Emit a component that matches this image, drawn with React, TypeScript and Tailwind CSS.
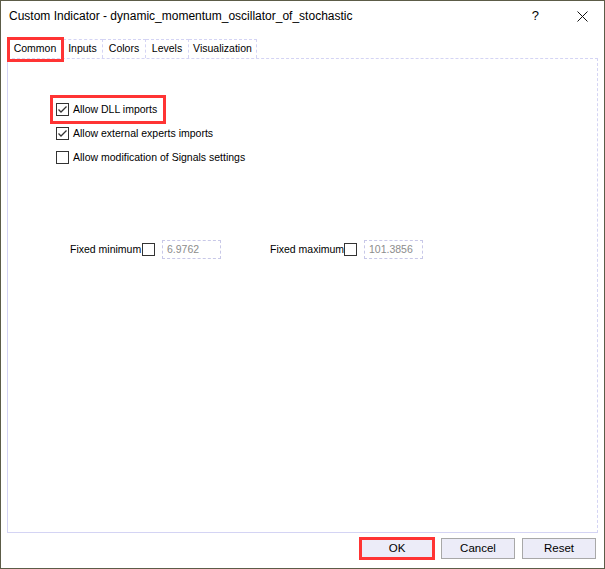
import React from "react";

const font = { fontFamily: '"Liberation Sans", Arial, sans-serif' };

function CheckBox({ checked }: { checked?: boolean }) {
  return (
    <span className="flex h-[13px] w-[13px] shrink-0 items-center justify-center border border-[#333333] bg-white">
      {checked && (
        <svg width="11" height="11" viewBox="0 0 11 11" fill="none">
          <path d="M1.5 5.5 L4 8 L9.5 2.5" stroke="#333333" strokeWidth="1.3" />
        </svg>
      )}
    </span>
  );
}

function CheckRow({ label, checked }: { label: string; checked?: boolean }) {
  return (
    <div className="flex h-[13px] items-center gap-[4px] whitespace-nowrap text-[10.5px] text-black">
      <CheckBox checked={checked} />
      <span>{label}</span>
    </div>
  );
}

function Tab({ label, width, active }: { label: string; width: string; active?: boolean }) {
  return (
    <div
      className={
        active
          ? `relative flex h-[19px] items-center justify-center text-[10.5px] text-black ${width}`
          : `flex h-[19px] items-center justify-center border-t border-r border-dashed border-[#d4d4f4] text-[10.5px] text-black ${width}`
      }
    >
      {label}
      {active && (
        <span className="pointer-events-none absolute left-0 -top-[2px] h-[25px] w-[57px] border-[3px] border-[#ff3434]" />
      )}
    </div>
  );
}

function NumBox({ value }: { value: string }) {
  return (
    <div className="flex h-[19px] w-[59px] shrink-0 items-center border border-dashed border-[#c8c8e8] px-[4px] text-[10.5px] text-[#8c8c8c]">
      {value}
    </div>
  );
}

function Button({ label, marked }: { label: string; marked?: boolean }) {
  return (
    <div className="relative flex h-[21px] w-[74px] items-center justify-center border border-[#a8a8a8] bg-[#ececf8] text-[11.5px] text-black">
      {label}
      {marked && (
        <span className="pointer-events-none absolute -inset-[2px] border-[3px] border-[#ff3434]" />
      )}
    </div>
  );
}

export default function App() {
  return (
    <div
      className="flex h-[569px] w-[605px] flex-col border border-[#5c5c48] bg-white"
      style={font}
    >
      <div className="flex h-[30px] items-center pl-[8px] pr-[16px] text-[12px] text-black">
        <span className="flex-1">
          Custom Indicator - dynamic_momentum_oscillator_of_stochastic
        </span>
        <span className="mr-[38px] text-[13px]">?</span>
        <svg width="11" height="11" viewBox="0 0 11 11">
          <path d="M0.5 0.5 L10.5 10.5 M10.5 0.5 L0.5 10.5" stroke="#111111" strokeWidth="1" />
        </svg>
      </div>

      <div className="mt-[8px] flex items-end pl-[6px]">
        <Tab label="Common" width="w-[56px]" active />
        <Tab label="Inputs" width="w-[40px]" />
        <Tab label="Colors" width="w-[43px]" />
        <Tab label="Levels" width="w-[43px]" />
        <Tab label="Visualization" width="w-[68px]" />
      </div>

      <div className="mx-[6px] flex h-[475px] flex-col border border-dashed border-[#d4d4f4] [border-bottom-style:solid] [border-left-style:solid]">
        <div className="mt-[44px] flex flex-col gap-[11px] pl-[48px]">
          <div className="relative">
            <CheckRow label="Allow DLL imports" checked />
            <span className="pointer-events-none absolute -left-[6px] -top-[8px] h-[29px] w-[116px] border-[3px] border-[#ff3434]" />
          </div>
          <CheckRow label="Allow external experts imports" checked />
          <CheckRow label="Allow modification of Signals settings" />
        </div>

        <div className="mt-[76px] flex items-center whitespace-nowrap pl-[62px] text-[10.5px] text-black">
          <span className="w-[72px] shrink-0">Fixed minimum</span>
          <CheckBox />
          <span className="ml-[7px]">
            <NumBox value="6.9762" />
          </span>
          <span className="ml-[49px] w-[74px] shrink-0">Fixed maximum</span>
          <CheckBox />
          <span className="ml-[7px]">
            <NumBox value="101.3856" />
          </span>
        </div>
      </div>

      <div className="mt-[5px] flex justify-end gap-[7px] pr-[8px]">
        <Button label="OK" marked />
        <Button label="Cancel" />
        <Button label="Reset" />
      </div>
    </div>
  );
}
